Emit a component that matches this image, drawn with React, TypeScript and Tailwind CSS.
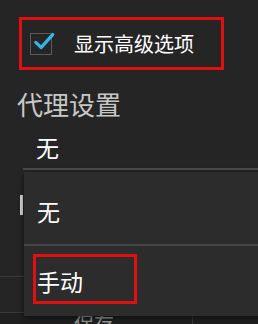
export default function App() {
  return (
    <div
      className="relative flex h-[324px] w-[258px] flex-col overflow-hidden bg-[#252525]"
      style={{ fontFamily: '"Noto Sans CJK SC", "Noto Sans", sans-serif' }}
    >
      {/* Advanced options checkbox */}
      <div className="pl-[19px] pt-[17px]">
        <div className="flex h-[53px] w-[205px] items-center border-[3px] border-[#e01010] pl-[8px]">
          <div className="relative h-[22px] w-[22px] border-[1.5px] border-[#5a5a5a]">
            <svg
              viewBox="0 0 24 24"
              className="absolute left-[1px] top-[-4px] h-[22px] w-[24px]"
              fill="none"
            >
              <path
                d="M3 13.5 L9 19 L21.5 5"
                stroke="#33b5e5"
                strokeWidth="3.6"
                strokeLinecap="round"
                strokeLinejoin="round"
              />
            </svg>
          </div>
          <span className="ml-[22px] text-[20px] leading-none text-white">显示高级选项</span>
        </div>
      </div>

      {/* Proxy settings */}
      <div className="mt-[21px] pl-[17px] text-[26px] leading-none text-[#c8c8c8]">代理设置</div>
      <div className="mt-[19px] pl-[36px] text-[23px] leading-none text-white">无</div>
      <div className="ml-[23px] mt-[9px] h-[2px] bg-[#4a4a4a]" />

      {/* content behind the popup */}
      <div className="ml-[20px] mt-[25px] h-[20px] w-[3px] bg-[#d8d8d8]" />
      <div className="mt-[61px] h-[1px] w-[40px] bg-[#3a3a3a]" />

      <div className="mt-auto flex h-[12px] border-t border-[#3a3a3a] bg-[#202020]">
        <div className="w-[193px] overflow-hidden border-r border-[#3a3a3a] pl-[74px] pt-[1px] text-[20px] leading-none text-[#9a9a9a]">
          保存
        </div>
      </div>

      {/* dropdown popup */}
      <div className="absolute left-[24px] top-[172px] flex h-[144px] w-[240px] flex-col bg-[#2c2c2c] shadow-[0_2px_6px_rgba(0,0,0,0.6)]">
        <div className="flex h-[72px] items-center pl-[13px] pt-[6px] text-[23px] leading-none text-white">无</div>
        <div className="h-[2px] bg-[#454545]" />
        <div className="pl-[9px] pt-[8px]">
          <div className="flex h-[50px] w-[104px] items-center border-[3px] border-[#e01010] pl-[1px] pt-[4px] text-[23px] leading-none text-white">
            手动
          </div>
        </div>
      </div>
    </div>
  );
}
